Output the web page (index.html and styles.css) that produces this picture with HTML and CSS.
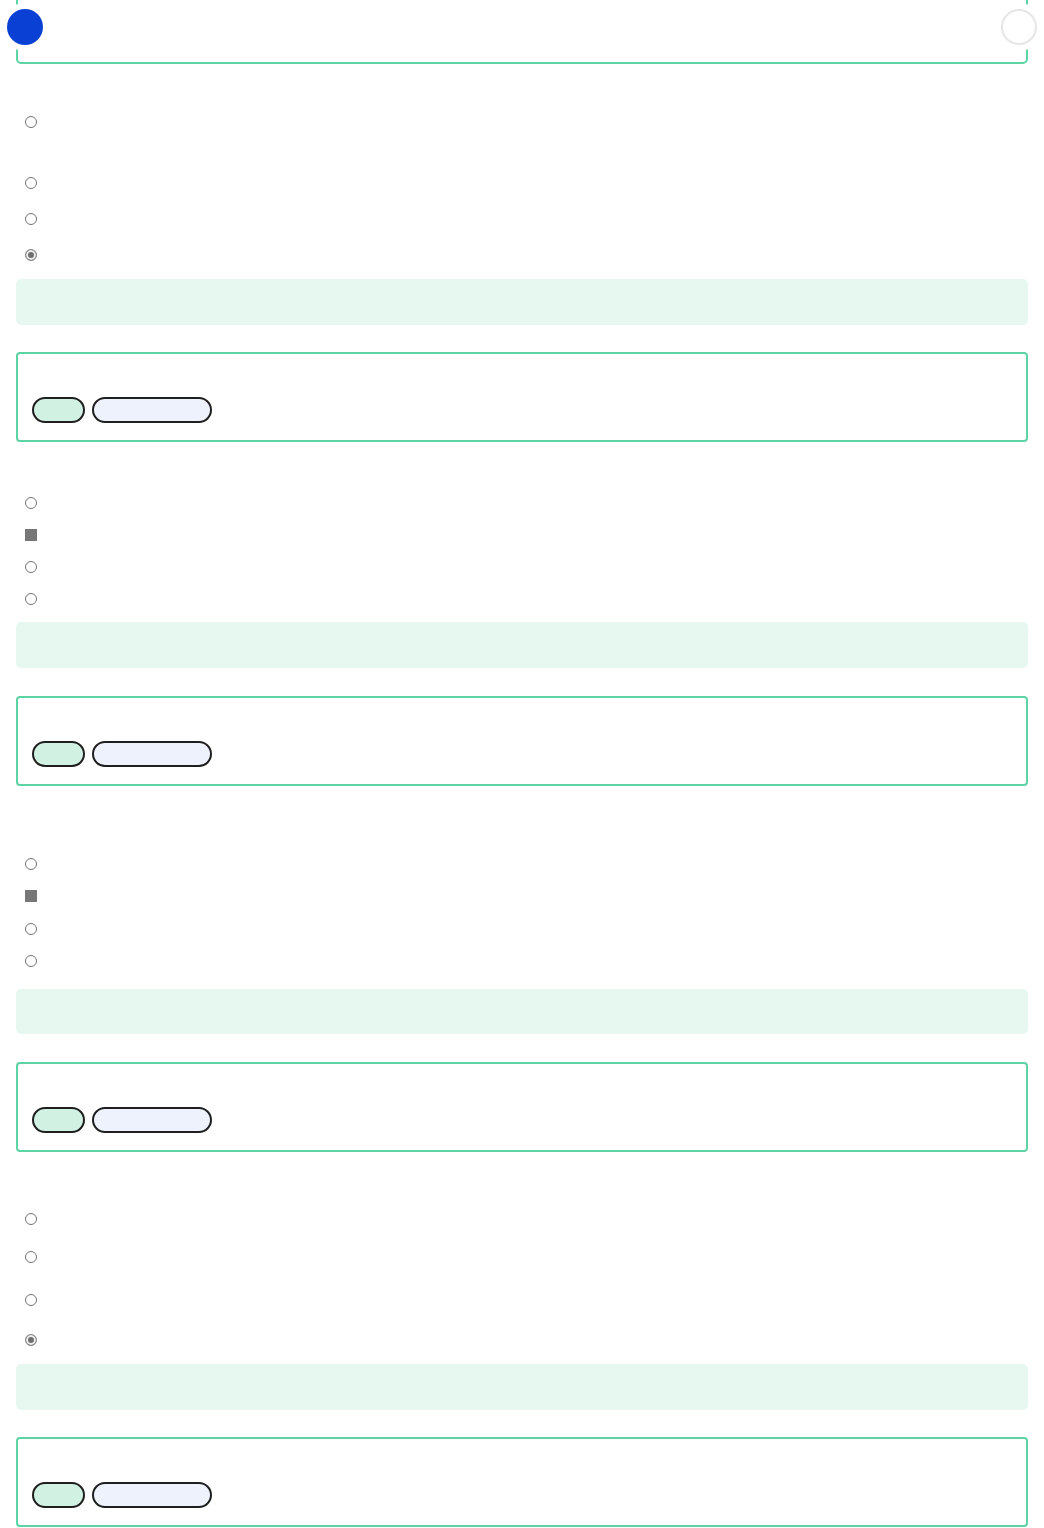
FILE: index.html
```html
<!DOCTYPE html>
<html>
    <head>
        <meta name="viewport" content="width=device-width, initial-scale=1.0">
        <title>quiz</title>
        <link rel="stylesheet" href="styles.css">
    </head>
    <body>
        <div class="page">
            <div class="progress">
                <span class="step step-done"></span>
                <span class="step"></span>
            </div>

            <div class="question">
                <div class="qhead qhead-1"></div>
                <div class="options">
                    <div class="opt opt-61"><span class="mark radio"></span><span class="label"></span></div>
                    <div class="opt opt-36"><span class="mark radio"></span><span class="label"></span></div>
                    <div class="opt opt-36"><span class="mark radio"></span><span class="label"></span></div>
                    <div class="opt"><span class="mark radio checked"></span><span class="label"></span></div>
                </div>
                <div class="feedback"></div>
                <div class="answer">
                    <span class="pill pill-ok"></span>
                    <span class="pill pill-info"></span>
                </div>
            </div>

            <div class="question">
                <div class="qhead qhead-2"></div>
                <div class="options">
                    <div class="opt"><span class="mark radio"></span><span class="label"></span></div>
                    <div class="opt"><span class="mark box"></span><span class="label"></span></div>
                    <div class="opt"><span class="mark radio"></span><span class="label"></span></div>
                    <div class="opt"><span class="mark radio"></span><span class="label"></span></div>
                </div>
                <div class="feedback fb-tight"></div>
                <div class="answer ans-28"></div>
            </div>

            <div class="question">
                <div class="qhead qhead-3"></div>
                <div class="options">
                    <div class="opt"><span class="mark radio"></span><span class="label"></span></div>
                    <div class="opt opt-33"><span class="mark box"></span><span class="label"></span></div>
                    <div class="opt"><span class="mark radio"></span><span class="label"></span></div>
                    <div class="opt opt-36"><span class="mark radio"></span><span class="label"></span></div>
                </div>
                <div class="feedback fb-short"></div>
                <div class="answer ans-28"></div>
            </div>

            <div class="question">
                <div class="qhead qhead-4"></div>
                <div class="options">
                    <div class="opt opt-38"><span class="mark radio"></span><span class="label"></span></div>
                    <div class="opt opt-43"><span class="mark radio"></span><span class="label"></span></div>
                    <div class="opt opt-40"><span class="mark radio"></span><span class="label"></span></div>
                    <div class="opt"><span class="mark radio checked"></span><span class="label"></span></div>
                </div>
                <div class="feedback"></div>
                <div class="answer"></div>
            </div>
        </div>
        <script>
            // every answer box gets the same two pills
            document.querySelectorAll(".answer").forEach(function(box){
                if(box.children.length == 0){
                    box.innerHTML = '<span class="pill pill-ok"></span><span class="pill pill-info"></span>';
                }
            });
        </script>
    </body>
</html>
```

FILE: styles.css
```css
*{
    margin: 0;
    padding: 0;
    box-sizing: border-box;
    font-family: Inter, "Liberation Sans", sans-serif;
}
body{
    background: #fff;
}
.page{
    padding: 0 16px;
}
.progress{
    display: flex;
    justify-content: space-between;
    align-items: center;
    height: 75px;
    margin-top: -11px;
    border: 2px solid #5cd4a4;
    border-radius: 5px;
}
.step{
    width: 36px;
    height: 36px;
    border-radius: 50%;
    background: #fff;
    border: 2px solid #e6e6e6;
    box-shadow: 0 0 0 6px #fff;
    margin-right: -11px;
}
.step-done{
    background: #0b40d4;
    border: 0;
    margin-right: 0;
    margin-left: -11px;
}
.qhead-1{ height: 42px; }
.qhead-2{ height: 45px; }
.qhead-3{ height: 62px; }
.qhead-4{ height: 51px; }
.options{
    display: flex;
    flex-direction: column;
}
.opt{
    display: flex;
    align-items: flex-start;
    height: 32px;
    padding-left: 9px;
}
.opt-33{ height: 33px; }
.opt-36{ height: 36px; }
.opt-38{ height: 38px; }
.opt-40{ height: 40px; }
.opt-43{ height: 43px; }
.opt-61{ height: 61px; }
.mark{
    width: 12px;
    height: 12px;
    margin-top: 10px;
    flex-shrink: 0;
}
.radio{
    border: 1.5px solid #737373;
    border-radius: 50%;
    background: #fff;
}
.radio.checked{
    border: 1px solid #8a8a8a;
    background: #6f6f6f;
    box-shadow: inset 0 0 0 2px #eeeeee;
}
.box{
    background: #777;
}
.label{
    margin-left: 10px;
    color: #fff;
}
.feedback{
    margin-top: 8px;
    height: 46px;
    background: #e7f8f0;
    border-radius: 5px;
}
.fb-tight{ margin-top: 7px; }
.fb-short{ height: 45px; }
.answer{
    display: flex;
    gap: 7px;
    margin-top: 27px;
    height: 90px;
    padding: 43px 14px 17px;
    border: 2px solid #5cd4a4;
    border-radius: 4px;
}
.ans-28{ margin-top: 28px; }
.pill{
    height: 26px;
    border: 2px solid #1f1f1f;
    border-radius: 13px;
}
.pill-ok{
    width: 53px;
    background: #d1f2e3;
}
.pill-info{
    width: 120px;
    background: #eef2fd;
}
```
